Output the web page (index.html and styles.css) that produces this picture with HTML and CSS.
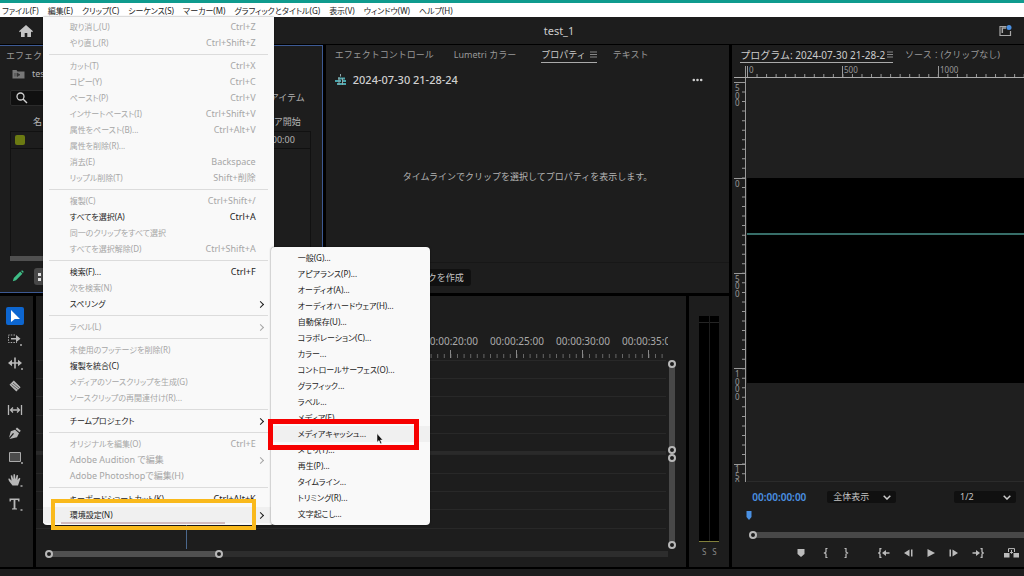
FILE: index.html
```html
<!DOCTYPE html>
<html lang="ja">
<head>
<meta charset="utf-8">
<title>test_1</title>
<link rel="stylesheet" href="styles.css">
</head>
<body>
<div class="app">
  <nav class="menubar">
    <button>ファイル(F)</button>
    <div class="menu-host">
      <button>編集(E)</button>
      <div class="menu edit-menu" role="menu">
        <button class="item" disabled><span>取り消し(U)</span><kbd>Ctrl+Z</kbd></button>
        <button class="item" disabled><span>やり直し(R)</span><kbd>Ctrl+Shift+Z</kbd></button>
        <hr>
        <button class="item" disabled><span>カット(T)</span><kbd>Ctrl+X</kbd></button>
        <button class="item" disabled><span>コピー(Y)</span><kbd>Ctrl+C</kbd></button>
        <button class="item" disabled><span>ペースト(P)</span><kbd>Ctrl+V</kbd></button>
        <button class="item" disabled><span>インサートペースト(I)</span><kbd>Ctrl+Shift+V</kbd></button>
        <button class="item" disabled><span>属性をペースト(B)...</span><kbd>Ctrl+Alt+V</kbd></button>
        <button class="item" disabled><span>属性を削除(R)...</span></button>
        <button class="item" disabled><span>消去(E)</span><kbd>Backspace</kbd></button>
        <button class="item" disabled><span>リップル削除(T)</span><kbd>Shift+削除</kbd></button>
        <hr>
        <button class="item" disabled><span>複製(C)</span><kbd>Ctrl+Shift+/</kbd></button>
        <button class="item"><span>すべてを選択(A)</span><kbd>Ctrl+A</kbd></button>
        <button class="item" disabled><span>同一のクリップをすべて選択</span></button>
        <button class="item" disabled><span>すべてを選択解除(D)</span><kbd>Ctrl+Shift+A</kbd></button>
        <hr>
        <button class="item"><span>検索(F)...</span><kbd>Ctrl+F</kbd></button>
        <button class="item" disabled><span>次を検索(N)</span></button>
        <button class="item sub"><span>スペリング</span></button>
        <hr>
        <button class="item sub" disabled><span>ラベル(L)</span></button>
        <hr>
        <button class="item" disabled><span>未使用のフッテージを削除(R)</span></button>
        <button class="item"><span>複製を統合(C)</span></button>
        <button class="item" disabled><span>メディアのソースクリップを生成(G)</span></button>
        <button class="item" disabled><span>ソースクリップの再関連付け(R)...</span></button>
        <hr>
        <button class="item sub"><span>チームプロジェクト</span></button>
        <hr>
        <button class="item" disabled><span>オリジナルを編集(O)</span><kbd>Ctrl+E</kbd></button>
        <button class="item sub latin" disabled><span>Adobe Audition で編集</span></button>
        <button class="item latin" disabled><span>Adobe Photoshopで編集(H)</span></button>
        <hr>
        <button class="item"><span>キーボードショートカット(K)</span><kbd>Ctrl+Alt+K</kbd></button>
        <button class="item sub active"><span>環境設定(N)</span></button>
        <div class="underline"></div>
        <div class="frame frame-yellow"></div>
        <div class="menu submenu" role="menu">
          <button class="item">一般(G)...</button>
          <button class="item">アピアランス(P)...</button>
          <button class="item">オーディオ(A)...</button>
          <button class="item">オーディオハードウェア(H)...</button>
          <button class="item">自動保存(U)...</button>
          <button class="item">コラボレーション(C)...</button>
          <button class="item">カラー...</button>
          <button class="item">コントロールサーフェス(O)...</button>
          <button class="item">グラフィック...</button>
          <button class="item">ラベル...</button>
          <button class="item">メディア(E)...</button>
          <button class="item active">メディアキャッシュ...</button>
          <button class="item">メモリ(Y)...</button>
          <button class="item">再生(P)...</button>
          <button class="item">タイムライン...</button>
          <button class="item">トリミング(R)...</button>
          <button class="item">文字起こし...</button>
          <div class="frame frame-red"></div>
          <svg class="cursor" width="8" height="12" viewBox="0 0 8 12"><path d="M1 0.5v8.8l2-1.8 1.4 3.3 1.4-.6-1.4-3.2h2.4z" fill="#111" stroke="#fff" stroke-width=".5"/></svg>
        </div>
      </div>
    </div>
    <button>クリップ(C)</button>
    <button>シーケンス(S)</button>
    <button>マーカー(M)</button>
    <button>グラフィックとタイトル(G)</button>
    <button>表示(V)</button>
    <button>ウィンドウ(W)</button>
    <button>ヘルプ(H)</button>
  </nav>

  <header class="titlebar">
    <button class="icon-btn" aria-label="ホーム"><svg width="14" height="12" viewBox="0 0 14 12"><path d="M7 0 0 6.3l.9 1L2 6.4V12h3.7V8h2.6v4H12V6.4l1.1.9.9-1z" fill="#c4c4c4"/></svg></button>
    <h1>test_1</h1>
    <button class="icon-btn" aria-label="ワークスペース"><svg width="13" height="12" viewBox="0 0 13 12"><path d="M7.500 1.500H1v9h10.500V6" fill="none" stroke="#a8a8a8" stroke-width="1.200"/><path d="M2.500 3H7M3.300 3v5" stroke="#a8a8a8" stroke-width="1.500"/><circle cx="10" cy="2.500" r="2.500" fill="#4a90e2"/></svg></button>
  </header>

  <main class="workspace">
    <div class="left">
      <div class="upper">
        <section class="panel project">
          <div class="tabs"><button class="tab">エフェク</button></div>
          <div class="crumb"><svg width="13" height="10" viewBox="0 0 13 10"><path d="M.5 1h4l1 1.500h7V9.500H.5z" fill="#777"/><path d="M3 4v3.500M5 4l3 1.800L5 7.500z" stroke="#333" fill="#333" stroke-width=".7"/></svg><span>tes</span></div>
          <div class="search-row">
            <label class="search"><svg width="12" height="12" viewBox="0 0 12 12"><circle cx="4.500" cy="4.500" r="3.500" fill="none" stroke="#d0d0d0" stroke-width="1.300"/><path d="M7 7l4 4" stroke="#d0d0d0" stroke-width="1.400"/></svg><input type="text" aria-label="検索"></label>
            <span>アイテム</span>
          </div>
          <div class="bin-head"><span>名</span><span>ィア開始</span></div>
          <div class="bin"><div class="bin-row"><i class="swatch"></i><span>:00:00</span></div></div>
          <div class="bin-scroll"></div>
          <div class="bin-foot">
            <svg width="12" height="12" viewBox="0 0 12 12"><path d="M.8 11.200 1.800 8 8.200 1.600l2.200 2.200L4 10.200zM9 .9l1.200-.7 1.500 1.500-.7 1.200z" fill="#3ebd86"/></svg>
            <button class="view-btn" aria-label="リスト表示"><svg width="9" height="9" viewBox="0 0 9 9"><path d="M0 1h3v3H0zM0 6h3v3H0zM5 1h4v3H5zM5 6h4v3H5z" fill="#ddd"/></svg></button>
          </div>
        </section>

        <section class="panel props">
          <div class="tabs">
            <button class="tab">エフェクトコントロール</button>
            <button class="tab">Lumetri カラー</button>
            <button class="tab on">プロパティ <svg width="7" height="7" viewBox="0 0 7 7"><path d="M0 1h7M0 3.500h7M0 6h7" stroke="#888"/></svg></button>
            <button class="tab">テキスト</button>
          </div>
          <div class="clip">
            <svg width="12" height="12" viewBox="0 0 12 12"><path d="M3 4.500h7M0 7h6M7 7h4M2 10h9" stroke="#4aa5ac" stroke-width="1.800"/><path d="M5.500 0v2.500M4 3v8M7.500 4v7" stroke="#8fa9ab"/></svg>
            <h2>2024-07-30 21-28-24</h2>
            <button class="icon-btn" aria-label="その他"><svg width="11" height="4" viewBox="0 0 11 4"><path d="M.5 2a1.300 1.300 0 1 0 2.600 0 1.300 1.300 0 1 0-2.600 0M4.200 2a1.300 1.300 0 1 0 2.600 0 1.300 1.300 0 1 0-2.600 0M7.900 2a1.300 1.300 0 1 0 2.600 0 1.300 1.300 0 1 0-2.600 0" fill="#ccc"/></svg></button>
          </div>
          <p class="hint">タイムラインでクリップを選択してプロパティを表示します。</p>
          <div class="props-foot"><button class="create">クを作成</button></div>
        </section>
      </div>

      <div class="lower">
        <section class="panel tools">
          <button class="tool on" aria-label="選択ツール"><svg width="18" height="18" viewBox="0 0 18 18"><path d="M5 3v12l3.800-3H14z" fill="#fff"/></svg></button>
          <button class="tool" aria-label="トラック選択ツール"><svg width="18" height="18" viewBox="0 0 18 18"><path d="M9 5H2.500v7.500H11" fill="none" stroke="#aaa" stroke-dasharray="1.500 1.200"/><path d="M5 8h5V5l4.500 3.700-4.500 3.500V9.500H5z" fill="#b8b8b8"/><path d="M14 14h2v2h-2z" fill="#888"/></svg></button>
          <button class="tool" aria-label="リップルツール"><svg width="18" height="18" viewBox="0 0 18 18"><path d="M8.200 3.500h1.600v11H8.200zM2 9l4-3.300v2.500h6V5.700L16 9l-4 3.300V9.800H6v2.500z" fill="#b8b8b8"/><path d="M15 14h2v2h-2z" fill="#888"/></svg></button>
          <button class="tool" aria-label="レーザーツール"><svg width="18" height="18" viewBox="0 0 18 18"><path d="M7.800 3.500 3.500 7.800l6.800 6.800 4.300-4.300z" fill="#b8b8b8"/><path d="m5.500 7.500 6.200 5M7 6l6 5" stroke="#444" stroke-width=".8"/></svg></button>
          <button class="tool" aria-label="スリップツール"><svg width="18" height="18" viewBox="0 0 18 18"><path d="M2.500 4v10M15.500 4v10M5 9h8M7 6.500 4.500 9 7 11.500M11 6.500 13.500 9 11 11.500" fill="none" stroke="#b8b8b8" stroke-width="1.300"/></svg></button>
          <button class="tool" aria-label="ペンツール"><svg width="18" height="18" viewBox="0 0 18 18"><path d="m11 3.500 3.800 3.300-1.300 1.500-3.900-3.400zM9 5.700l4 3.500-2 4-7.500 1.800L8 9.800 7 9l-4 4.800 1.800-6.500z" fill="#b8b8b8"/></svg></button>
          <button class="tool" aria-label="長方形ツール"><svg width="18" height="18" viewBox="0 0 18 18"><path d="M3.500 4.500h11v9h-11z" fill="#4c4c4c" stroke="#aaa"/><path d="M15 14h2v2h-2z" fill="#888"/></svg></button>
          <button class="tool" aria-label="手のひらツール"><svg width="18" height="18" viewBox="0 0 18 18"><path d="M6.500 14.500 3 10l-.8-2.300 1.300-.2 2 2.200-.8-5.200 1.400-.3 1.200 4 .2-4.900h1.500l.4 4.900 1.300-4.300 1.400.4-.6 4.800 1.700-2.300 1.200.8L12 14.500z" fill="#b8b8b8"/><path d="M14.500 14h2v2h-2z" fill="#888"/></svg></button>
          <button class="tool" aria-label="文字ツール"><svg width="18" height="18" viewBox="0 0 18 18"><path d="M3.500 3.500h10v3h-1.200l-.5-1.500H9.400v8.200l1.600.4v.9H6v-.9l1.600-.4V5H5.200l-.5 1.500H3.500z" fill="#b8b8b8"/><path d="M14.500 14h2v2h-2z" fill="#888"/></svg></button>
        </section>

        <section class="panel timeline">
          <div class="tl-ruler">
            <svg width="100%" height="24"><g class="tl-text"><text x="415" y="9">00:00:20:00</text><text x="481" y="9">00:00:25:00</text><text x="547" y="9">00:00:30:00</text><text x="613" y="9">00:00:35:00</text></g><path d="M18.400 20H700" stroke="#666" stroke-width="4" stroke-dasharray="1 5.600"/><path d="M18 18H700" stroke="#888" stroke-width="8" stroke-dasharray="1 65"/></svg>
          </div>
          <div class="tracks">
            <div class="track-group"><i></i><i></i><i></i><i></i><i></i></div>
            <div class="vscroll"></div>
            <div class="track-group"><i></i><i></i><i></i><i></i><i></i></div>
            <div class="vscroll"></div>
            <div class="playhead"></div>
          </div>
          <div class="hscroll"><div class="thumb"></div></div>
        </section>

        <section class="panel meters">
          <div class="meter"><i></i><i></i></div>
          <div class="solo"><span>S</span><span>S</span></div>
        </section>
      </div>
    </div>

    <section class="panel program">
      <div class="tabs">
        <button class="tab on">プログラム: 2024-07-30 21-28-2 <svg width="6" height="7" viewBox="0 0 6 7"><path d="M0 1h6M0 3.500h6M0 6h6" stroke="#888"/></svg></button>
        <button class="tab">ソース：(クリップなし)</button>
      </div>
      <div class="monitor">
        <svg class="ruler-x" width="100%" height="12"><path d="M15.500 0v12M13.500 0v12M110.500 0v11M206.500 0v11" stroke="#999"/><path d="M15 9.500H600" stroke="#999" stroke-width="3" stroke-dasharray="1 8.540"/><path d="M2 11.500H600" stroke="#aaa"/><g class="ruler-text"><text x="17" y="7">0</text><text x="112" y="7">500</text><text x="208" y="7">1000</text></g></svg>
        <svg class="ruler-y" width="15" height="100%"><path d="M13.500 0v408" stroke="#999"/><path d="M11.500 4v404" stroke="#999" stroke-width="3" stroke-dasharray="1 8.540"/><path d="M2 4.500h11M2 100.500h11M2 195.500h11M2 290.500h11M2 386.500h11" stroke="#999"/><g class="ruler-text"><text x="3 3 3" y="13 21 28">500</text><text x="3" y="109">0</text><text x="3 3 3" y="204 211 219">500</text><text x="3 3 3 3" y="299 307 314 322">1000</text><text x="3 3 3" y="394 401 408">150</text></g></svg>
        <div class="stage"><div class="video"><div class="wave"></div></div></div>
      </div>
      <div class="readout">
        <span class="timecode">00:00:00:00</span>
        <label class="pick"><select aria-label="ズーム"><option>全体表示</option></select><svg width="8" height="5" viewBox="0 0 8 5"><path d="m.7.7 3.300 3.300L7.300.7" fill="none" stroke="#ccc" stroke-width="1.500"/></svg></label>
        <label class="pick quality"><select aria-label="解像度"><option>1/2</option></select><svg width="8" height="5" viewBox="0 0 8 5"><path d="m.7.7 3.300 3.300L7.300.7" fill="none" stroke="#ccc" stroke-width="1.500"/></svg></label>
      </div>
      <div class="scrub"><svg width="6" height="9" viewBox="0 0 6 9"><path d="M.5 0h5v6L3 9 .5 6z" fill="#4a90e2"/></svg></div>
      <div class="hscroll"></div>
      <div class="transport">
        <button aria-label="マーカー"><svg width="8" height="8" viewBox="0 0 8 8"><path d="M.5 0h7v5L4 8 .5 5z" fill="#bbb"/></svg></button>
        <button aria-label="インをマーク"><svg width="5" height="10" viewBox="0 0 5 10"><path d="M4.500.5H3v3.500L1.500 5 3 6v3.500h1.500" fill="none" stroke="#bbb" stroke-width="1.200"/></svg></button>
        <button aria-label="アウトをマーク"><svg width="5" height="10" viewBox="0 0 5 10"><path d="M.5.500H2v3.500L3.500 5 2 6v3.500H.5" fill="none" stroke="#bbb" stroke-width="1.200"/></svg></button>
        <button aria-label="インへ移動"><svg width="12" height="10" viewBox="0 0 12 10"><path d="M3.500.5H2v3.500L.7 5 2 6v3.500h1.500M6 5h5.500" fill="none" stroke="#bbb" stroke-width="1.300"/><path d="M4 5l4-3v6z" fill="#bbb"/></svg></button>
        <button aria-label="前のフレーム"><svg width="9" height="8" viewBox="0 0 9 8"><path d="M0 4l5.500-3.500v7zM7 .5h1.500v7H7z" fill="#bbb"/></svg></button>
        <button aria-label="再生"><svg width="8" height="8" viewBox="0 0 8 8"><path d="M.5 0 8 4 .5 8z" fill="#bbb"/></svg></button>
        <button aria-label="次のフレーム"><svg width="9" height="8" viewBox="0 0 9 8"><path d="M.5.500H2v7H.5zM3.500.5 9 4 3.500 7.500z" fill="#bbb"/></svg></button>
        <button aria-label="アウトへ移動"><svg width="12" height="10" viewBox="0 0 12 10"><path d="M8.500.5H10v3.500L11.300 5 10 6v3.500H8.500M.5 5H6" fill="none" stroke="#bbb" stroke-width="1.300"/><path d="M8 5 4 2v6z" fill="#bbb"/></svg></button>
        <button aria-label="リフト"><svg width="15" height="10" viewBox="0 0 15 10"><path d="M0 5h5.500v4.500H0zM9.500 5H15v4.500H9.500z" fill="#bbb"/><path d="M4.500 4V.6h6V4M7.500 2v3M6 4l1.500 1.500L9 4" fill="none" stroke="#bbb"/></svg></button>
      </div>
    </section>
  </main>
  <footer class="status"></footer>
</div>
</body>
</html>
```
FILE: styles.css
```css
*, *::before, *::after { box-sizing: border-box; }
body {
  margin: 0;
  background: #000;
  color: #b4b4b4;
  font: 9px/12px "Noto Sans", "Noto Sans CJK JP", sans-serif;
}
button, input, select, kbd { font: inherit; color: inherit; }
button { padding: 0; border: 0; background: none; text-align: left; white-space: nowrap; }
svg { display: block; flex: none; }
h1, h2, p { margin: 0; font-weight: 400; }

.app { display: flex; flex-direction: column; height: 100vh; overflow: hidden; border-top: 3px solid #0f9b8e; }

/* Menu bar and drop-down menus */
.menubar {
  display: flex; gap: 9px; height: 14px; flex: none; padding: 0 2px;
  background: #fff; color: #222;
  font-size: 8px; line-height: 13px; font-feature-settings: "palt";
}
.menubar > * { flex: none; }
.menu-host { display: flex; position: relative; }
.menu {
  position: absolute; z-index: 2; background: #f9f9f9; color: #1c1c1c;
  border-radius: 0 0 4px 4px; box-shadow: 0 0 2px #0008;
}
.edit-menu { left: -5px; top: 14px; width: 231px; padding: 2px 0; }
.item { display: flex; align-items: center; width: 100%; height: 16px; padding: 0 18px 0 27px; line-height: 16px; }
.item span { flex: 1; }
.item:disabled { color: #a6a6a6; }
.item kbd, .item.latin { font-size: 9px; }
.item.sub { padding-right: 11px; }
.item.sub::after { content: ""; width: 5px; height: 5px; border: solid currentColor; border-width: 1px 1px 0 0; transform: rotate(45deg); }
.item.active { background: #f0f0f0; }
.menu hr { height: 1px; margin: 3px 6px; border: 0; background: #dcdcdc; }
.submenu { left: 228px; bottom: 0; width: 159px; padding: 3px 0; border-radius: 4px; }
.frame { position: absolute; border: 5px solid #f60000; pointer-events: none; }
.frame-red { left: -3px; top: 172px; width: 151px; height: 31px; }
.frame-yellow { left: 8px; bottom: -5px; width: 205px; height: 31px; border: 4px solid #f9b91c; }
.underline { position: absolute; left: 18px; bottom: 1px; width: 164px; height: 2px; background: #d3bcbf; }
.cursor { position: absolute; left: 105px; top: 186px; }

/* Title bar */
.titlebar { display: grid; grid-template-columns: 1fr auto 1fr; align-items: center; height: 27px; flex: none; padding: 0 12px 0 19px; background: #1d1d1d; }
.titlebar h1 { font-size: 11px; line-height: 16px; color: #ccc; padding-left: 87px; }
.titlebar .icon-btn:last-child { justify-self: end; }
.icon-btn { display: block; }

/* Workspace grid */
.workspace { display: grid; grid-template-columns: minmax(0, 5fr) minmax(0, 2fr); gap: 3px; flex: 1; min-height: 0; padding-top: 1px; }
.left { display: grid; grid-template-rows: minmax(0, 248fr) minmax(0, 272fr); gap: 3px; min-height: 0; }
.upper { display: grid; grid-template-columns: minmax(0, 4fr) minmax(0, 5fr); gap: 3px; min-height: 0; }
.lower { display: grid; grid-template-columns: 33px minmax(0, 1fr) 40px; gap: 3px; min-height: 0; }
.panel { display: flex; flex-direction: column; min-width: 0; min-height: 0; background: #1d1d1d; overflow: hidden; }
.status { height: 7px; flex: none; margin-top: 2px; background: #1d1d1d; }

.tabs { display: flex; flex: none; height: 18px; }
.tab { display: flex; align-items: center; gap: 4px; flex: none; height: 18px; padding-top: 2px; border-bottom: 1px solid transparent; color: #999; }
.tab.on { color: #ccc; border-color: #aaa; }

/* Project panel */
.project { border: 1px solid #3d5a94; border-left: 0; padding: 0 11px 0 10px; }
.project .tabs { margin-left: -4px; }
.crumb { display: flex; align-items: center; gap: 7px; height: 20px; padding-left: 2px; }
.search-row { display: flex; justify-content: space-between; align-items: center; height: 17px; margin-top: 5px; padding-right: 6px; }
.search { display: flex; align-items: center; gap: 6px; width: 160px; height: 16px; padding-left: 5px; background: #101010; border: 1px solid #2b2b2b; border-radius: 2px; }
.search input { width: 120px; padding: 0; border: 0; background: none; outline: 0; }
.bin-head { display: flex; justify-content: space-between; height: 24px; padding: 10px 10px 0 23px; }
.bin { flex: 1; min-height: 0; margin-top: 1px; border: 1px solid #111; border-bottom: 0; }
.bin-row { display: flex; justify-content: space-between; align-items: center; height: 17px; padding: 0 15px 0 4px; border-bottom: 1px solid #101010; }
.swatch { width: 10px; height: 10px; border-radius: 2px; background: #6b7a12; }
.bin-scroll { height: 5px; flex: none; background: #505050; }
.bin-foot { display: flex; align-items: center; gap: 10px; height: 31px; flex: none; padding-left: 2px; }
.view-btn { padding: 4px; background: #484848; border-radius: 3px; }

/* Properties panel */
.props .tabs { gap: 20px; padding-left: 9px; }
.props .tab:nth-child(3) { margin-left: 5px; }
.props .tab:nth-child(4) { margin-left: -4px; }
.clip { display: flex; align-items: center; gap: 6px; height: 32px; padding: 0 26px 0 9px; margin-top: 1px; }
.clip h2 { flex: 1; font-size: 11px; font-weight: 500; line-height: 16px; color: #d0d0d0; }
.hint { flex: 1; display: flex; align-items: center; justify-content: center; padding-bottom: 3px; }
.props-foot { display: flex; align-items: center; height: 31px; flex: none; padding-left: 95px; border-top: 1px solid #171717; }
.create { height: 17px; padding: 0 7px; background: #101010; border-radius: 3px; color: #c4c4c4; }

/* Tools */
.tools { align-items: center; justify-content: space-between; padding: 11px 3px 54px 0; }
.tool { width: 18px; height: 18px; flex: none; border-radius: 2px; }
.tool.on { background: #0d66d0; }

/* Timeline */
.tl-ruler { flex: none; margin: 40px 18px 0 0; }
.tl-text { fill: #aaa; font-size: 10px; text-anchor: middle; }
.tracks { position: relative; display: grid; grid-template-columns: minmax(0, 1fr) 8px; grid-template-rows: repeat(2, minmax(0, 1fr)); column-gap: 3px; flex: 1; min-height: 0; padding-right: 9px; }
.track-group { display: flex; flex-direction: column; border-bottom: 3px solid #2a2a2a; }
.track-group:nth-of-type(3) { border-color: transparent; }
.track-group i { flex: 1; border-top: 1px solid #282828; }
.vscroll { position: relative; width: 6px; margin: 3px 0 3px; background: #484848; }
.vscroll::before, .vscroll::after, .hscroll::before, .thumb::after {
  content: ""; position: absolute; left: -1px; width: 8px; height: 8px;
  border: 2px solid #b8b8b8; border-radius: 50%; background: #1d1d1d;
}
.vscroll::before { top: -3px; }
.vscroll::after { bottom: -3px; }
.playhead { position: absolute; left: 150px; top: 0; bottom: 0; width: 1px; background: #4b688d; }
.hscroll { position: relative; height: 6px; flex: none; background: #484848; }
.timeline .hscroll { margin: 2px 18px 10px 12px; background: #2d2d2d; }
.hscroll::before { top: -1px; left: -3px; z-index: 1; }
.thumb { position: relative; width: 172px; height: 6px; background: #505050; }
.thumb::after { left: auto; right: -3px; top: -1px; }

/* Audio meters */
.meters { align-items: center; padding-top: 20px; }
.meter { display: flex; gap: 1px; flex: 1; width: 20px; border-bottom: 1px solid #81803b; }
.meter i { flex: 1; background: linear-gradient(#000 6px, #252525 6px, #252525 7px, #000 7px); }
.solo { display: flex; gap: 6px; height: 25px; align-items: center; padding-bottom: 5px; font-size: 8px; color: #888; }

/* Program monitor */
.program .tabs { gap: 12px; padding-left: 8px; height: 21px; }
.program .tab.on { gap: 2px; font-size: 10px; }
.monitor { display: grid; grid-template-columns: 15px minmax(0, 1fr); grid-template-rows: 12px minmax(0, 1fr); flex: 1; min-height: 0; }
.ruler-x { grid-column: 1 / 3; }
.ruler-text { fill: #999; font-size: 8px; }
.ruler-y { overflow: hidden; }
.stage { display: flex; flex-direction: column; padding: 100px 0 98px; border-bottom: 1px solid #2b2b2b; background: #1f1f1f; }
.video { flex: 1; background: #000; padding-top: 55px; }
.wave { height: 2px; background: #376e69; }
.readout { display: flex; align-items: center; height: 25px; flex: none; margin-top: 2px; padding: 0 8px 0 20px; }
.timecode { width: 75px; font-size: 10px; font-weight: 600; color: #4a90e2; }
.pick { position: relative; width: 69px; }
.pick select { appearance: none; display: block; width: 100%; height: 12px; padding: 0 6px; border: 0; border-radius: 2px; background: #101010; color: #c4c4c4; }
.pick svg { position: absolute; right: 5px; top: 4px; pointer-events: none; }
.quality { width: 62px; margin-left: auto; }
.scrub { height: 23px; flex: none; padding: 2px 0 0 14px; }
.program .hscroll { margin-left: 20px; }
.transport { display: flex; align-items: center; height: 29px; flex: none; padding: 0 5px 0 65px; }
.transport button { flex: none; }
.transport button:nth-child(2) { margin-left: 18px; }
.transport button:nth-child(3) { margin-left: 16px; }
.transport button:nth-child(4) { margin-left: 29px; }
.transport button:nth-child(n+5) { margin-left: 14px; }
.transport button:last-child { margin-left: auto; }
```
